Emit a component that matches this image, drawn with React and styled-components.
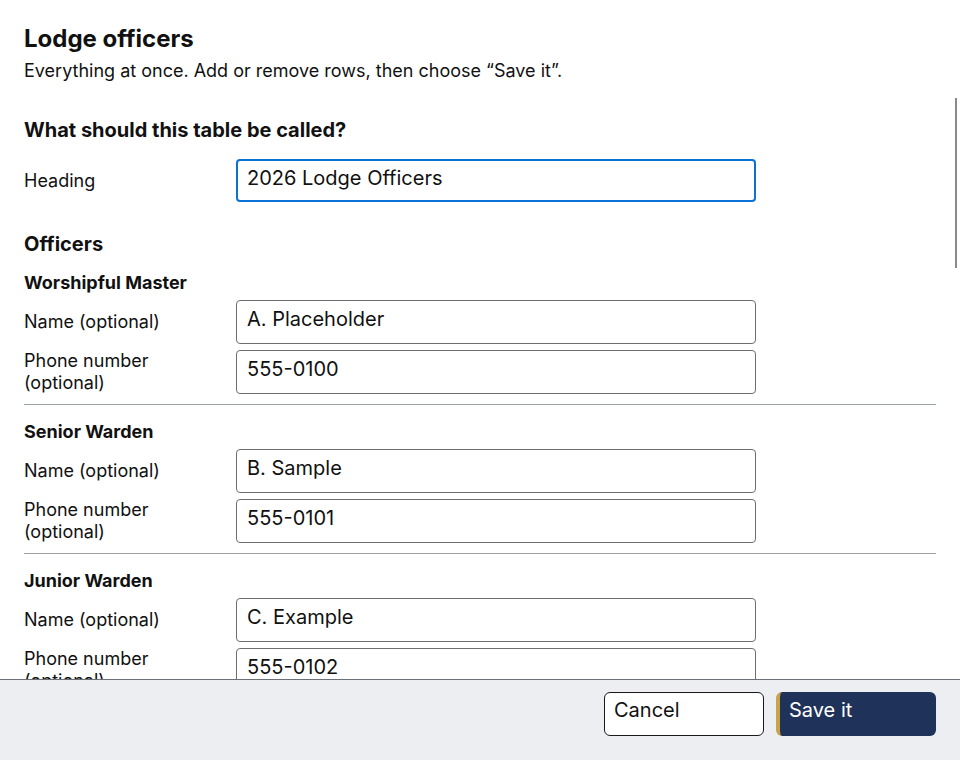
import React, { useEffect, useRef } from "react";
import styled, { createGlobalStyle } from "styled-components";

const Global = createGlobalStyle`
  html, body { margin: 0; padding: 0; height: 100%; }
  body { font-family: Inter, "Noto Sans", "Liberation Sans", sans-serif; color: #111; background: #fff; }
  #root { height: 100%; }
  * { box-sizing: border-box; }
`;

const Shell = styled.div`
  height: 100vh;
  display: flex;
  flex-direction: column;
`;

const ScrollWrap = styled.div`
  position: relative;
  flex: 1;
  min-height: 0;
`;

const Scroll = styled.main`
  height: 100%;
  overflow-y: auto;
  scrollbar-width: none;
  padding: 24px 24px 24px 24px;
  &::-webkit-scrollbar { display: none; }
`;

const Thumb = styled.div`
  position: absolute;
  right: 3px;
  top: 98px;
  width: 2px;
  height: 170px;
  background: #8a8a8a;
`;

const Title = styled.h1`
  margin: 0;
  font-size: 24px;
  line-height: 30px;
  font-weight: 700;
`;

const Lead = styled.p`
  margin: 5px 0 0;
  font-size: 18px;
  line-height: 24px;
`;

const SectionTitle = styled.h2`
  margin: ${(p) => p.$mt}px 0 ${(p) => p.$mb}px;
  font-size: 20px;
  line-height: 24px;
  font-weight: 700;
`;

const FieldRow = styled.div`
  display: grid;
  grid-template-columns: 200px 520px;
  column-gap: 12px;
  align-items: center;
  & + & { margin-top: 6px; }
`;

const Label = styled.label`
  font-size: 18px;
  line-height: 22px;
`;

const Input = styled.input`
  height: ${(p) => (p.$focused ? 43 : 44)}px;
  width: 100%;
  padding: 0 10px 6px;
  border: 1px solid #6e6e6e;
  border-radius: 4px;
  font-family: inherit;
  font-size: 20px;
  color: #111;
  background: #fff;
  outline: none;
  ${(p) => p.$focused && `
    border: 2px solid #0a72d4;
    padding-left: 9px;
  `}
  &:focus {
    border: 2px solid #0a72d4;
    padding-left: 9px;
  }
`;

const Officer = styled.section`
  padding: 16px 0 10px;
  border-bottom: 1px solid #9ca1a8;
`;

const OfficerTitle = styled.h3`
  margin: 0 0 6px;
  font-size: 18px;
  line-height: 22px;
  font-weight: 700;
`;

const Footer = styled.footer`
  flex: 0 0 81px;
  border-top: 1px solid #6b7078;
  background: #eceef2;
  display: flex;
  justify-content: flex-end;
  align-items: flex-start;
  gap: 12px;
  padding: 12px 24px;
`;

const Button = styled.button`
  width: 160px;
  height: 44px;
  border-radius: 6px;
  font-family: inherit;
  font-size: 20px;
  line-height: 24px;
  text-align: left;
  padding: 5px 9px 0;
  display: flex;
  align-items: flex-start;
  cursor: pointer;
  ${(p) =>
    p.$primary
      ? `
    background: #1f3259;
    color: #fff;
    border: none;
    border-left: 4px solid #c9a24c;
    padding-top: 6px;
  `
      : `
    background: #fff;
    color: #111;
    border: 1px solid #1a1a1a;
  `}
`;

const officers = [
  { role: "Worshipful Master", name: "A. Placeholder", phone: "555-0100" },
  { role: "Senior Warden", name: "B. Sample", phone: "555-0101" },
  { role: "Junior Warden", name: "C. Example", phone: "555-0102" },
  { role: "Treasurer", name: "D. Person", phone: "555-0103" },
  { role: "Secretary", name: "E. Someone", phone: "555-0104" },
];

export default function App() {
  const ref = useRef(null);
  useEffect(() => {
    if (ref.current) {
      ref.current.focus();
      ref.current.setSelectionRange(0, 0);
    }
  }, []);
  return (
    <>
      <Global />
      <Shell>
        <ScrollWrap>
          <Scroll>
            <Title>Lodge officers</Title>
            <Lead>Everything at once. Add or remove rows, then choose “Save it”.</Lead>
            <SectionTitle $mt={35} $mb={17}>What should this table be called?</SectionTitle>
            <FieldRow>
              <Label htmlFor="heading">Heading</Label>
              <Input id="heading" ref={ref} $focused defaultValue="2026 Lodge Officers" />
            </FieldRow>
            <SectionTitle $mt={30} $mb={0}>Officers</SectionTitle>
            {officers.map((o, i) => (
              <Officer key={o.role}>
                <OfficerTitle>{o.role}</OfficerTitle>
                <FieldRow>
                  <Label htmlFor={`n${i}`}>Name (optional)</Label>
                  <Input id={`n${i}`} defaultValue={o.name} />
                </FieldRow>
                <FieldRow>
                  <Label htmlFor={`p${i}`}>Phone number (optional)</Label>
                  <Input id={`p${i}`} defaultValue={o.phone} />
                </FieldRow>
              </Officer>
            ))}
          </Scroll>
          <Thumb />
        </ScrollWrap>
        <Footer>
          <Button type="button">Cancel</Button>
          <Button type="button" $primary>Save it</Button>
        </Footer>
      </Shell>
    </>
  );
}
